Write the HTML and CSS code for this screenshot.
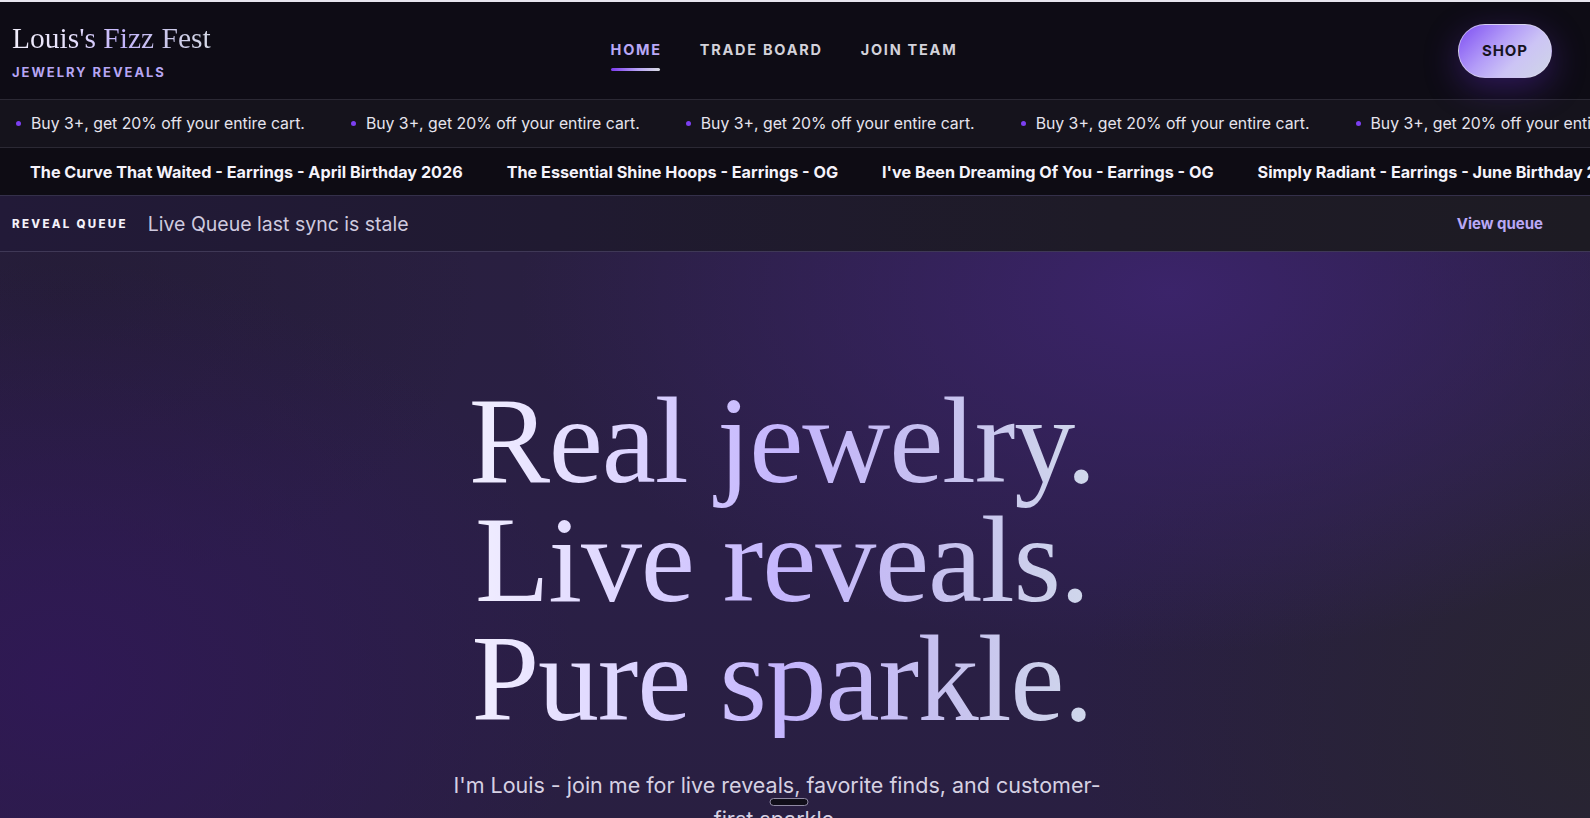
FILE: index.html
```html
<!DOCTYPE html>
<html lang="en">
<head>
<meta charset="utf-8">
<title>Louis's Fizz Fest</title>
<link rel="stylesheet" href="styles.css">
</head>
<body>
<div class="topline"></div>
<header class="site-header">
  <div class="brand">
    <div class="brand-title">Louis's Fizz Fest</div>
    <div class="brand-sub">JEWELRY REVEALS</div>
  </div>
  <nav class="nav">
    <a class="nav-link active" href="#">HOME</a>
    <a class="nav-link" href="#">TRADE BOARD</a>
    <a class="nav-link" href="#">JOIN TEAM</a>
  </nav>
  <div class="header-right">
    <a class="shop-btn" href="#">SHOP</a>
  </div>
</header>

<div class="promo">
  <div class="promo-track">
    <span class="promo-item"><i class="dot"></i>Buy 3+, get 20% off your entire cart.</span>
    <span class="promo-item"><i class="dot"></i>Buy 3+, get 20% off your entire cart.</span>
    <span class="promo-item"><i class="dot"></i>Buy 3+, get 20% off your entire cart.</span>
    <span class="promo-item"><i class="dot"></i>Buy 3+, get 20% off your entire cart.</span>
    <span class="promo-item"><i class="dot"></i>Buy 3+, get 20% off your entire cart.</span>
    <span class="promo-item"><i class="dot"></i>Buy 3+, get 20% off your entire cart.</span>
  </div>
</div>

<div class="products">
  <div class="products-track">
    <span class="product-item">The Curve That Waited - Earrings - April Birthday 2026</span>
    <span class="product-item">The Essential Shine Hoops - Earrings - OG</span>
    <span class="product-item">I've Been Dreaming Of You - Earrings - OG</span>
    <span class="product-item">Simply Radiant - Earrings - June Birthday 2026</span>
    <span class="product-item">The Curve That Waited - Earrings - April Birthday 2026</span>
  </div>
</div>

<div class="queue-bar">
  <div class="queue-left">
    <span class="queue-label">REVEAL QUEUE</span>
    <span class="queue-status">Live Queue last sync is stale</span>
  </div>
  <a class="queue-link" href="#">View queue</a>
</div>

<main class="hero">
  <h1 class="hero-title">Real jewelry.<br>Live reveals.<br>Pure sparkle.</h1>
  <p class="hero-sub">I'm Louis - join me for live reveals, favorite finds, and customer-first sparkle.</p>
  <div class="scroll-pill"></div>
</main>
</body>
</html>
```
FILE: styles.css
```css
* { box-sizing: border-box; }
html, body { margin: 0; padding: 0; }
body {
  background: #0e0c15;
  font-family: Inter, "Noto Sans", "Liberation Sans", sans-serif;
  color: #e6e3ee;
  width: 1590px;
  height: 818px;
  overflow: hidden;
}
a { text-decoration: none; color: inherit; }

.topline { height: 2px; background: #e7e5ee; }

.site-header {
  height: 97px;
  display: grid;
  grid-template-columns: 1fr auto 1fr;
  align-items: center;
  padding: 0 38px 0 12px;
  background: #0e0c15;
}
.brand { display: flex; flex-direction: column; gap: 9px; }
.brand-title {
  font-family: "Liberation Serif", "DejaVu Serif", serif;
  font-size: 29.5px;
  line-height: 33px;
  background: linear-gradient(90deg, #f1eefb 0%, #e6e0fb 30%, #c2b3fb 55%, #cbc8ea 78%, #d5d9e6 100%);
  -webkit-background-clip: text;
  background-clip: text;
  color: transparent;
  width: max-content;
}
.brand-sub {
  font-size: 13px;
  line-height: 16px;
  font-weight: 700;
  letter-spacing: 0.15em;
  color: #b7a6f4;
}

.nav { display: flex; gap: 38px; padding-right: 0; padding-left: 4px; margin-top: -2px; }
.nav-link {
  position: relative;
  font-size: 14.5px;
  font-weight: 700;
  letter-spacing: 0.12em;
  color: #d3d2da;
  line-height: 18px;
}
.nav-link.active { color: #b9a8f6; }
.nav-link.active::after {
  content: "";
  position: absolute;
  left: 0;
  right: 0.12em;
  top: 27px;
  height: 3px;
  border-radius: 2px;
  background: linear-gradient(90deg, #7c3aed 0%, #b7a3f5 55%, #d8dbe3 100%);
}

.header-right { display: flex; justify-content: flex-end; }
.shop-btn {
  width: 94px;
  height: 54px;
  border-radius: 27px;
  display: flex;
  align-items: center;
  justify-content: center;
  font-size: 15px;
  font-weight: 700;
  letter-spacing: 0.06em;
  color: #17141f;
  background: linear-gradient(135deg, #7d4df2 0%, #b39cf8 40%, #ccc4f5 65%, #cfd6e6 100%);
  border: 1px solid rgba(220, 215, 240, 0.7);
  box-shadow: 0 10px 34px rgba(110, 50, 220, 0.35);
}

.promo {
  height: 49px;
  border-top: 1px solid #2b2934;
  border-bottom: 1px solid #2b2934;
  background: #15131c;
  overflow: hidden;
  display: flex;
  align-items: center;
}
.promo-track {
  display: flex;
  gap: 46px;
  padding-left: 16px;
  white-space: nowrap;
}
.promo-item {
  display: flex;
  align-items: center;
  gap: 10px;
  font-size: 15.8px;
  color: #e6e4ee;
}
.dot {
  width: 5px;
  height: 5px;
  border-radius: 50%;
  background: #7b3ff0;
  flex: none;
}

.products {
  height: 48px;
  background: #0e0c14;
  border-bottom: 1px solid #34304a;
  overflow: hidden;
  display: flex;
  align-items: center;
}
.products-track {
  display: flex;
  gap: 44px;
  padding-left: 30px;
  white-space: nowrap;
}
.product-item {
  font-size: 16.2px;
  font-weight: 700;
  color: #f5f3fb;
}

.queue-bar {
  height: 56px;
  display: flex;
  align-items: center;
  justify-content: space-between;
  padding: 0 47px 0 12px;
  background: linear-gradient(90deg, #221a38 0%, #201a31 35%, #1e1b27 70%, #1d1b23 100%);
  border-bottom: 1px solid #3f3856;
}
.queue-left { display: flex; align-items: center; gap: 20px; }
.queue-label {
  font-size: 11.5px;
  font-weight: 800;
  letter-spacing: 0.2em;
  color: #f4f2fa;
}
.queue-status {
  font-size: 19.5px;
  color: #cfcadf;
}
.queue-link {
  font-size: 15px;
  font-weight: 700;
  color: #b9a8f6;
}

.hero {
  position: relative;
  height: 580px;
  padding: 129px 26px 0 0;
  text-align: center;
  background:
    radial-gradient(ellipse 650px 360px at 1170px 40px, rgba(60, 36, 108, 0.95) 0%, rgba(60, 36, 108, 0) 100%),
    radial-gradient(ellipse 520px 420px at 60px 430px, rgba(48, 24, 86, 0.9) 0%, rgba(48, 24, 86, 0) 100%),
    radial-gradient(ellipse 420px 300px at 60px 40px, rgba(34, 27, 50, 0.6) 0%, rgba(34, 27, 50, 0) 100%),
    radial-gradient(ellipse 520px 520px at 1600px 470px, rgba(40, 37, 48, 1) 0%, rgba(40, 37, 48, 0) 100%),
    linear-gradient(180deg, #291f40 0%, #2a1f46 55%, #291f41 100%);
}
.hero-title {
  margin: 0 auto;
  width: max-content;
  font-family: "Liberation Serif", "DejaVu Serif", serif;
  font-weight: 400;
  font-size: 122px;
  line-height: 119px;
  letter-spacing: -0.01em;
  background: linear-gradient(90deg, #f1eeff 0%, #ddd5ff 25%, #c4b5fd 50%, #c6c0ef 75%, #d0d8eb 100%);
  -webkit-background-clip: text;
  background-clip: text;
  color: transparent;
}
.hero-sub {
  margin: 30px auto 0;
  max-width: 670px;
  font-size: 21.5px;
  line-height: 34px;
  color: #d6d1e3;
  position: relative;
  left: -5px;
}
.scroll-pill {
  position: absolute;
  top: 546px;
  left: 50%;
  margin-left: -6px;
  transform: translateX(-50%);
  width: 39px;
  height: 8px;
  border-radius: 4px;
  background: #100e19;
  border: 1px solid #8f89a3;
}
```
